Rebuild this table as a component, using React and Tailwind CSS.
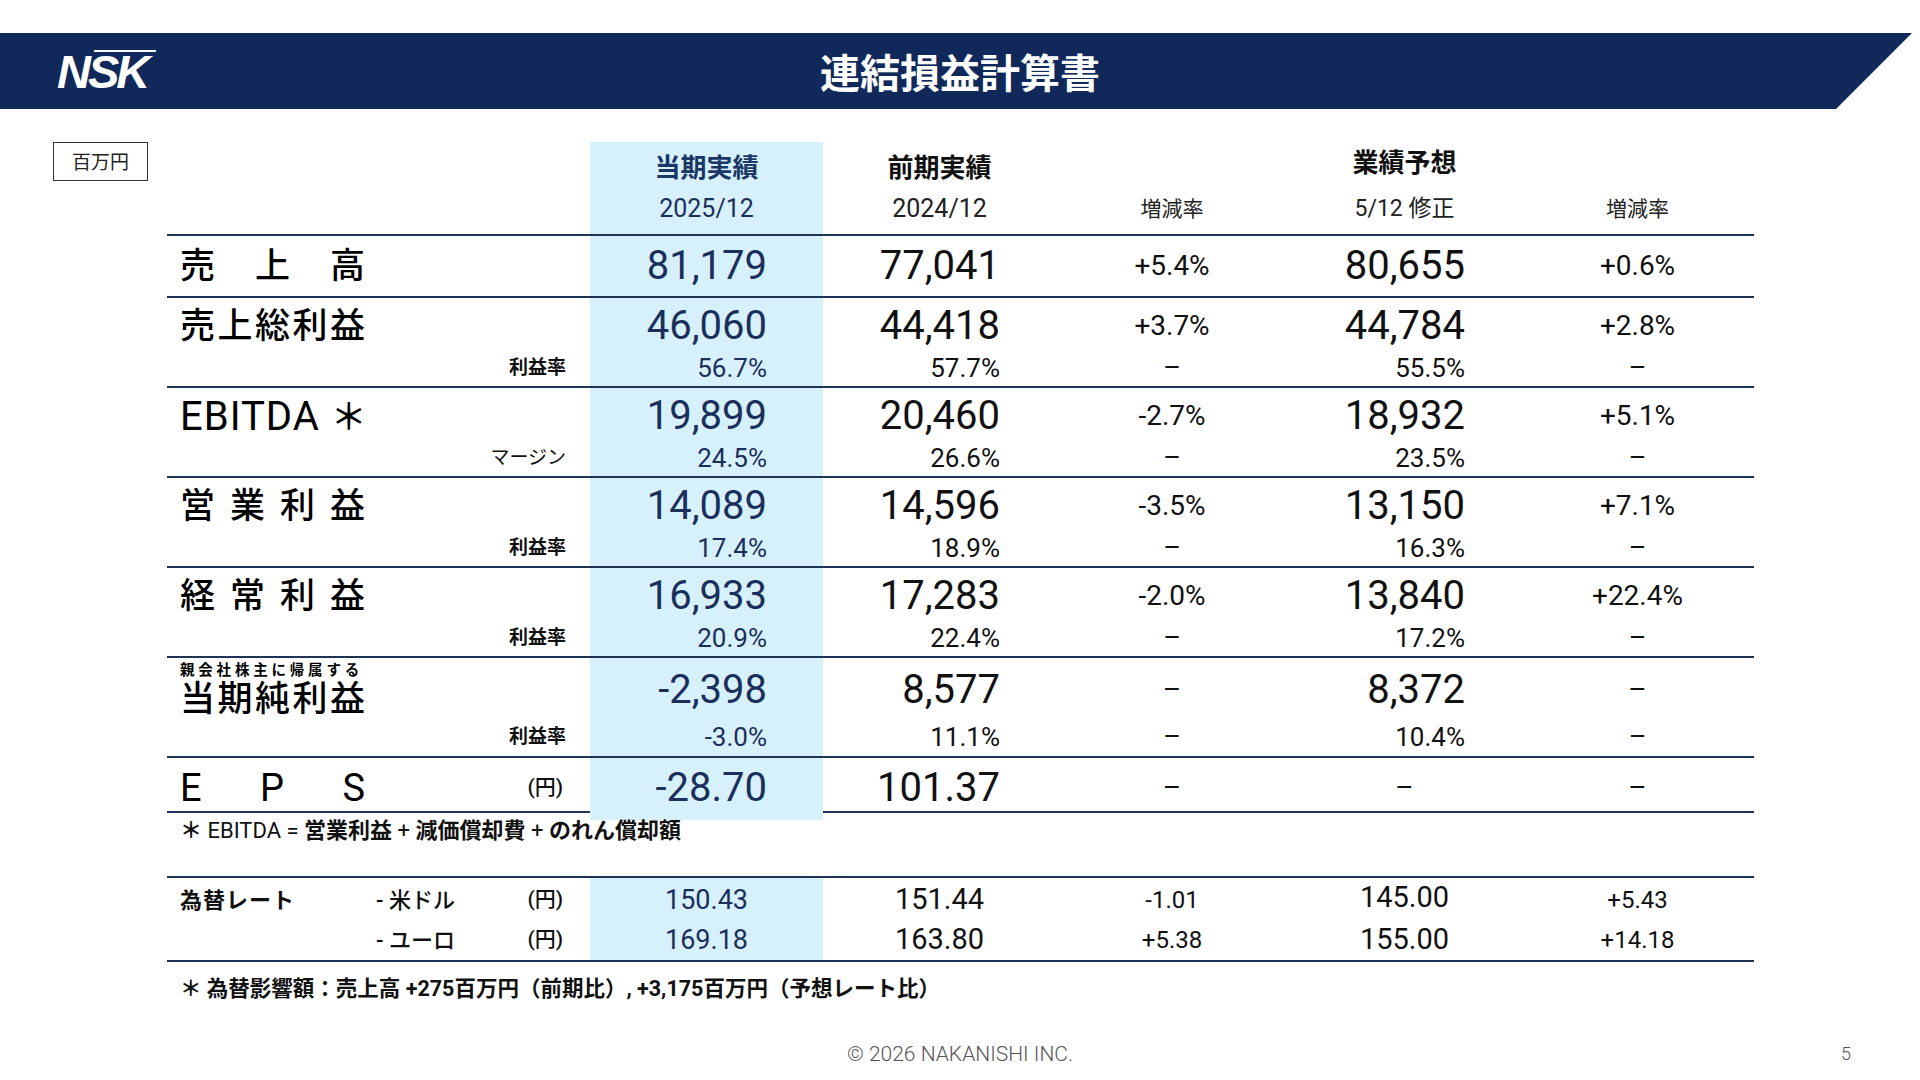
import React from "react";

const GRID = "grid grid-cols-[423px_233px_233px_232px_233px_233px]";
const LINE = "border-t-2 border-[#1f3455]";
const BLUE = "bg-[#d6f1fb]";
const NAVY = "text-[#1b2f5b]";
const INK = "text-[#111111]";

function Spread({ chars, className }) {
  return (
    <div className={"flex justify-between w-[185px] " + className}>
      {chars.map((c, i) => (
        <span key={i}>{c}</span>
      ))}
    </div>
  );
}

function Logo() {
  return (
    <div className="relative inline-block">
      <span className="font-['Liberation_Sans',Arial,sans-serif] italic font-black text-[47px] leading-none tracking-[-3px] text-white">
        NSK
      </span>
      <span className="absolute left-[37px] top-[2px] h-[2px] w-[62px] bg-white -skew-x-12" />
    </div>
  );
}

function HeadCell({ blue, title, sub, high, subClass }) {
  return (
    <div className={"flex flex-col items-center " + (blue ? BLUE : "")}>
      <div className={"h-[53px] " + (high ? "pt-[7px]" : "pt-[12px]")}>
        <div
          className={
            "h-[28px] leading-[28px] text-[26px] font-bold " +
            (blue ? "text-[#1b3766]" : "text-[#111111]")
          }
        >
          {title}
        </div>
      </div>
      <div className={"h-[28px] leading-[28px] " + subClass + " " + (blue ? NAVY : "text-[#222222]")}>
        {sub}
      </div>
    </div>
  );
}

function Val({ i, v, kind }) {
  const isDash = v === "–";
  const center = isDash || i === 2 || i === 4;
  const color = i === 0 ? NAVY : INK;
  let size;
  if (isDash) size = kind === "main" ? "text-[28px]" : "text-[27px]";
  else if (kind === "main") size = i === 2 || i === 4 ? "text-[28px]" : "text-[40px]";
  else size = "text-[26px]";
  return (
    <div
      className={
        "h-full flex items-center " +
        (center ? "justify-center " : "justify-end pr-[56px] ") +
        size +
        " " +
        color
      }
    >
      {v}
    </div>
  );
}

function DataRow({ label, sub, subBold, main, subv, tall }) {
  const mainH = tall ? "h-[64px]" : "h-[56px]";
  const subH = tall ? "h-[30px]" : "h-[28px]";
  return (
    <div className={GRID + " " + LINE + " " + (tall ? "h-[100px]" : "h-[90px]")}>
      <div className="flex flex-col">
        <div className={mainH + " pl-[13px] flex items-center"}>{label}</div>
        <div
          className={
            subH +
            " flex items-center justify-end pr-[24px] text-[19px] text-[#111111] " +
            (subBold ? "font-bold" : "font-normal")
          }
        >
          {sub}
        </div>
      </div>
      {main.map((v, i) => (
        <div key={i} className={"flex flex-col " + (i === 0 ? BLUE : "")}>
          <div className={mainH}>
            <Val i={i} v={v} kind="main" />
          </div>
          <div className={subH}>
            <Val i={i} v={subv[i]} kind="sub" />
          </div>
        </div>
      ))}
    </div>
  );
}

const LBL = "text-[35px] font-medium text-black leading-none";

export default function App() {
  return (
    <div className="w-[1920px] h-[1080px] bg-white flex flex-col overflow-hidden font-['Roboto','Noto_Sans_CJK_JP',sans-serif]">
      {/* Header band */}
      <div className="mt-[33px] h-[76px] w-[1920px] shrink-0 bg-[#10295a] [clip-path:polygon(0_0,1912px_0,1836px_100%,0_100%)] grid grid-cols-[1fr_auto_1fr] items-center">
        <div className="pl-[57px] flex items-center">
          <Logo />
        </div>
        <div className="text-white text-[40px] font-bold leading-none font-['Noto_Sans_CJK_JP',sans-serif]">
          連結損益計算書
        </div>
        <div />
      </div>

      {/* Body */}
      <div className="mt-[33px] flex items-start pl-[53px]">
        <div className="w-[95px] h-[39px] border-[1.5px] border-[#333333] flex items-center justify-center text-[19px] text-[#222222] font-['Noto_Sans_CJK_JP',sans-serif]">
          百万円
        </div>

        <div className="ml-[19px] w-[1587px]">
          {/* table header */}
          <div className={GRID + " h-[92px]"}>
            <div />
            <HeadCell blue title="当期実績" sub="2025/12" subClass="text-[25px] font-normal" />
            <HeadCell title="前期実績" sub="2024/12" subClass="text-[25px] font-normal" />
            <HeadCell title="" sub="増減率" subClass="text-[21px]" />
            <HeadCell title="業績予想" sub="5/12 修正" high subClass="text-[23px] font-normal" />
            <HeadCell title="" sub="増減率" subClass="text-[21px]" />
          </div>

          {/* 売上高 */}
          <div className={GRID + " " + LINE + " h-[62px]"}>
            <div className="pl-[13px] flex items-center">
              <Spread chars={["売", "上", "高"]} className={LBL} />
            </div>
            {["81,179", "77,041", "+5.4%", "80,655", "+0.6%"].map((v, i) => (
              <div key={i} className={i === 0 ? BLUE : ""}>
                <Val i={i} v={v} kind="main" />
              </div>
            ))}
          </div>

          <DataRow
            label={<div className={LBL + " tracking-[2.5px]"}>売上総利益</div>}
            sub="利益率"
            subBold
            main={["46,060", "44,418", "+3.7%", "44,784", "+2.8%"]}
            subv={["56.7%", "57.7%", "–", "55.5%", "–"]}
          />
          <DataRow
            label={
              <div className="text-[40px] tracking-[1px] text-black leading-none whitespace-nowrap">
                EBITDA <span className="text-[36px] font-['Noto_Sans_CJK_JP',sans-serif] font-medium">＊</span>
              </div>
            }
            sub="マージン"
            main={["19,899", "20,460", "-2.7%", "18,932", "+5.1%"]}
            subv={["24.5%", "26.6%", "–", "23.5%", "–"]}
          />
          <DataRow
            label={<Spread chars={["営", "業", "利", "益"]} className={LBL} />}
            sub="利益率"
            subBold
            main={["14,089", "14,596", "-3.5%", "13,150", "+7.1%"]}
            subv={["17.4%", "18.9%", "–", "16.3%", "–"]}
          />
          <DataRow
            label={<Spread chars={["経", "常", "利", "益"]} className={LBL} />}
            sub="利益率"
            subBold
            main={["16,933", "17,283", "-2.0%", "13,840", "+22.4%"]}
            subv={["20.9%", "22.4%", "–", "17.2%", "–"]}
          />

          {/* 当期純利益 */}
          <div className={GRID + " " + LINE + " h-[100px]"}>
            <div className="flex flex-col">
              <div className="h-[64px] pl-[13px] flex flex-col">
                <div className="mt-[4px] h-[18px] leading-[18px] text-[14.5px] font-bold tracking-[3.8px] text-black whitespace-nowrap">
                  親会社株主に帰属する
                </div>
                <div className="h-[38px] flex items-center">
                  <Spread chars={["当", "期", "純", "利", "益"]} className={LBL} />
                </div>
              </div>
              <div className="h-[30px] flex items-center justify-end pr-[24px] text-[19px] font-bold text-[#111111]">
                利益率
              </div>
            </div>
            {["-2,398", "8,577", "–", "8,372", "–"].map((v, i) => (
              <div key={i} className={"flex flex-col " + (i === 0 ? BLUE : "")}>
                <div className="h-[64px]">
                  <Val i={i} v={v} kind="main" />
                </div>
                <div className="h-[30px]">
                  <Val i={i} v={["-3.0%", "11.1%", "–", "10.4%", "–"][i]} kind="sub" />
                </div>
              </div>
            ))}
          </div>

          {/* EPS */}
          <div className={GRID + " " + LINE + " h-[55px]"}>
            <div className="pl-[13px] pb-[2px] flex items-center">
              <Spread chars={["E", "P", "S"]} className="text-[38px] text-black leading-none" />
              <div className="ml-auto pr-[27px] text-[21px] font-medium text-[#111111]">(円)</div>
            </div>
            {["-28.70", "101.37", "–", "–", "–"].map((v, i) => (
              <div key={i} className={"pb-[2px] " + (i === 0 ? BLUE : "")}>
                <Val i={i} v={v} kind="main" />
              </div>
            ))}
          </div>

          {/* EBITDA footnote */}
          <div className={LINE + " h-[65px] pt-[5px] pl-[13px]"}>
            <div className="leading-[26px] text-[22px] text-[#111111] whitespace-nowrap">
              <span className="font-bold">＊</span> EBITDA = <span className="font-bold">営業利益</span> +{" "}
              <span className="font-bold">減価償却費</span> + <span className="font-bold">のれん償却額</span>
            </div>
          </div>

          {/* FX rates */}
          <div className={GRID + " border-y-2 border-[#1f3455]"}>
            <div className="pt-[2px] flex flex-col text-[#111111]">
              <div className="h-[40px] pl-[13px] flex items-center">
                <div className="w-[196px] text-[22px] font-bold tracking-[1px]">為替レート</div>
                <div className="text-[22px] font-medium">-&nbsp;米ドル</div>
                <div className="ml-auto pr-[27px] text-[21px] font-medium">(円)</div>
              </div>
              <div className="h-[40px] pl-[13px] flex items-center">
                <div className="w-[196px]" />
                <div className="text-[22px] font-medium">-&nbsp;ユーロ</div>
                <div className="ml-auto pr-[27px] text-[21px] font-medium">(円)</div>
              </div>
            </div>
            <div className={"pt-[2px] flex flex-col " + BLUE + " " + NAVY}>
              <div className="h-[40px] flex items-center justify-center text-[27px]">150.43</div>
              <div className="h-[40px] flex items-center justify-center text-[27px]">169.18</div>
            </div>
            <div className={"pt-[2px] flex flex-col " + INK}>
              <div className="h-[40px] flex items-center justify-center text-[29px]">151.44</div>
              <div className="h-[40px] flex items-center justify-center text-[29px]">163.80</div>
            </div>
            <div className={"pt-[2px] flex flex-col " + INK}>
              <div className="h-[40px] flex items-center justify-center text-[24px]">-1.01</div>
              <div className="h-[40px] flex items-center justify-center text-[24px]">+5.38</div>
            </div>
            <div className={"pt-[2px] flex flex-col " + INK}>
              <div className="h-[40px] pb-[5px] flex items-center justify-center text-[29px]">145.00</div>
              <div className="h-[40px] flex items-center justify-center text-[29px]">155.00</div>
            </div>
            <div className={"pt-[2px] flex flex-col " + INK}>
              <div className="h-[40px] flex items-center justify-center text-[24px]">+5.43</div>
              <div className="h-[40px] flex items-center justify-center text-[24px]">+14.18</div>
            </div>
          </div>

          {/* FX footnote */}
          <div className="mt-[13px] pl-[13px] leading-[28px] text-[21.5px] font-bold text-[#111111] whitespace-nowrap">
            ＊ 為替影響額：売上高 +275百万円（前期比）, +3,175百万円（予想レート比）
          </div>
        </div>
      </div>

      {/* Footer */}
      <div className="mt-auto pb-[14px] grid grid-cols-[1fr_auto_1fr] items-center text-[#555555]">
        <div />
        <div className="text-[21px] font-light leading-[24px]">© 2026 NAKANISHI INC.</div>
        <div className="flex justify-end pr-[69px] text-[18px] font-light leading-[24px]">5</div>
      </div>
    </div>
  );
}
